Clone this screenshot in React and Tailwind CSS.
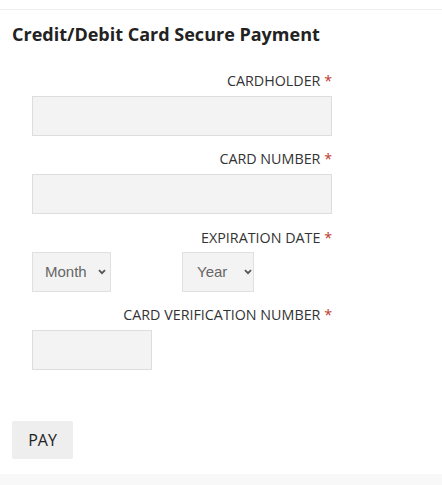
import React from "react";

function Label({ children }) {
  return (
    <div className="text-right text-[14.3px] leading-[20px] text-[#333] uppercase">
      {children} <span className="text-[#c0392b]">*</span>
    </div>
  );
}

function Chevron() {
  return (
    <svg width="8" height="6" viewBox="0 0 8 6" className="text-[#555]">
      <path d="M1 1.2 L4 4.2 L7 1.2" fill="none" stroke="currentColor" strokeWidth="1.8" />
    </svg>
  );
}

function Select({ text, w, pl, gap }) {
  return (
    <div
      className={`h-[40px] bg-[#f3f3f3] border border-[#e0e0e0] flex items-center ${w} ${pl}`}
      style={{ fontFamily: '"Liberation Sans", Arial, sans-serif' }}
    >
      <span className="text-[15px] text-[#666]">{text}</span>
      <span className={gap}><Chevron /></span>
    </div>
  );
}

export default function App() {
  return (
    <div
      className="w-[442px] h-[485px] bg-white flex flex-col overflow-hidden"
      style={{ fontFamily: '"Open Sans", sans-serif' }}
    >
      <div className="h-[9px] shrink-0" />
      <div className="border-t border-[#eeeeee] flex-1 flex flex-col">
        <h1 className="pl-[12px] pt-[12px] text-[18px] leading-[24px] font-bold text-[#222]">
          Credit/Debit Card Secure Payment
        </h1>
        <div className="ml-[32px] w-[300px] mt-[25px] flex flex-col">
          <Label>Cardholder</Label>
          <div className="mt-[5px] h-[40px] bg-[#f3f3f3] border border-[#dddddd]" />
          <div className="mt-[13px]">
            <Label>Card Number</Label>
          </div>
          <div className="mt-[5px] h-[40px] bg-[#f3f3f3] border border-[#dddddd]" />
          <div className="mt-[14px]">
            <Label>Expiration Date</Label>
          </div>
          <div className="mt-[4px] grid grid-cols-2">
            <Select text="Month" w="w-[79px]" pl="pl-[12px]" gap="ml-[11px]" />
            <Select text="Year" w="w-[72px]" pl="pl-[14px]" gap="ml-[17px]" />
          </div>
          <div className="mt-[13px]">
            <Label>Card Verification Number</Label>
          </div>
          <div className="mt-[5px] w-[120px] h-[40px] bg-[#f3f3f3] border border-[#dddddd]" />
        </div>
        <div className="pl-[12px] mt-[51px]">
          <button className="w-[61px] h-[38px] bg-[#eeeeee] rounded-[2px] text-[16px] text-[#222]">
            PAY
          </button>
        </div>
        <div className="mt-[15px] flex-1 bg-[#f8f8f8]" />
      </div>
    </div>
  );
}
